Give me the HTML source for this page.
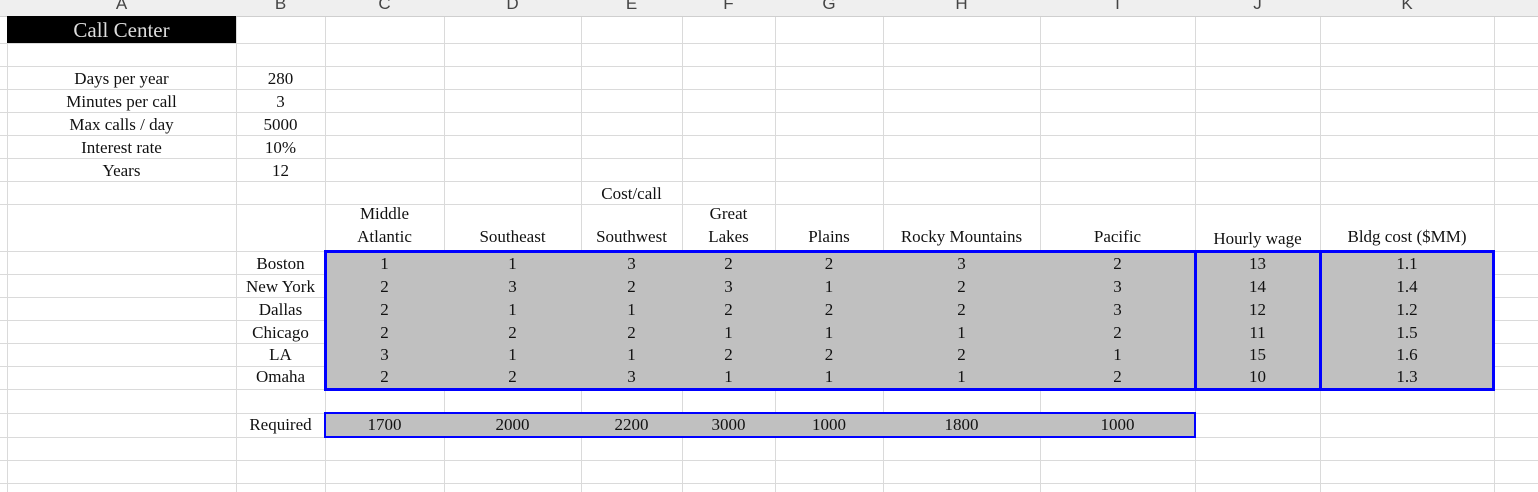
<!DOCTYPE html>
<html><head><meta charset="utf-8"><style>
body{margin:0;width:1538px;height:492px;overflow:hidden;background:#fff;position:relative;font-family:"Liberation Serif",serif;color:#111;font-size:17px}
.v{position:absolute;top:0;width:1px;height:492px;background:#dadada}
.hl{position:absolute;left:0;width:1538px;height:1px;background:#dadada}
.r{position:absolute;left:0;width:1538px;height:23px;line-height:24px}
.r>div{position:absolute;top:0;text-align:center;white-space:nowrap}
.a{left:7px;width:229px}.b{left:236px;width:89px}.c{left:325px;width:119px}.d{left:444px;width:137px}.e{left:581px;width:101px}.f{left:682px;width:93px}.g{left:775px;width:108px}.h{left:883px;width:157px}.i{left:1040px;width:155px}.j{left:1195px;width:125px}.k{left:1320px;width:174px}
.hdr{position:absolute;left:0;top:0;width:1538px;height:16px;background:#efefef;border-bottom:1px solid #cfcfcf;font-family:"Liberation Sans",sans-serif;color:#444;font-size:17px;line-height:12px;overflow:hidden}
.hdr div{position:absolute;top:-2px;text-align:center}
.fill{position:absolute;background:#c0c0c0}
.box{position:absolute;border:3px solid #0000ff;box-sizing:border-box}
</style></head><body>
<div class="hl" style="top:43px"></div><div class="hl" style="top:66px"></div><div class="hl" style="top:89px"></div><div class="hl" style="top:112px"></div><div class="hl" style="top:135px"></div><div class="hl" style="top:158px"></div><div class="hl" style="top:181px"></div><div class="hl" style="top:204px"></div><div class="hl" style="top:251px"></div><div class="hl" style="top:274px"></div><div class="hl" style="top:297px"></div><div class="hl" style="top:320px"></div><div class="hl" style="top:343px"></div><div class="hl" style="top:366px"></div><div class="hl" style="top:389px"></div><div class="hl" style="top:413px"></div><div class="hl" style="top:437px"></div><div class="hl" style="top:460px"></div><div class="hl" style="top:483px"></div>
<div class="v" style="left:7px"></div><div class="v" style="left:236px"></div><div class="v" style="left:325px"></div><div class="v" style="left:444px"></div><div class="v" style="left:581px"></div><div class="v" style="left:682px"></div><div class="v" style="left:775px"></div><div class="v" style="left:883px"></div><div class="v" style="left:1040px"></div><div class="v" style="left:1195px"></div><div class="v" style="left:1320px"></div><div class="v" style="left:1494px"></div>
<div class="hdr"><div class="a">A</div><div class="b">B</div><div class="c">C</div><div class="d">D</div><div class="e">E</div><div class="f">F</div><div class="g">G</div><div class="h">H</div><div class="i">I</div><div class="j">J</div><div class="k">K</div></div>
<div style="position:absolute;left:7px;top:16px;width:229px;height:27px;background:#000;color:#ddd;font-size:21px;line-height:28px;text-align:center">Call Center</div>
<div class="fill" style="left:325px;top:251px;width:1169px;height:138px"></div>
<div class="fill" style="left:325px;top:413px;width:870px;height:24px"></div>
<div class="r" style="top:67px"><div class="a">Days per year</div><div class="b">280</div></div>
<div class="r" style="top:90px"><div class="a">Minutes per call</div><div class="b">3</div></div>
<div class="r" style="top:113px"><div class="a">Max calls / day</div><div class="b">5000</div></div>
<div class="r" style="top:136px"><div class="a">Interest rate</div><div class="b">10%</div></div>
<div class="r" style="top:159px"><div class="a">Years</div><div class="b">12</div></div>
<div class="r" style="top:182px"><div class="e">Cost/call</div></div>
<div class="r" style="top:202px"><div class="c">Middle</div><div class="f">Great</div></div>
<div class="r" style="top:225px"><div class="c">Atlantic</div><div class="d">Southeast</div><div class="e">Southwest</div><div class="f">Lakes</div><div class="g">Plains</div><div class="h">Rocky Mountains</div><div class="i">Pacific</div><div class="j" style="top:2px">Hourly wage</div><div class="k">Bldg cost ($MM)</div></div>
<div class="r" style="top:252px"><div class="b">Boston</div><div class="c">1</div><div class="d">1</div><div class="e">3</div><div class="f">2</div><div class="g">2</div><div class="h">3</div><div class="i">2</div><div class="j">13</div><div class="k">1.1</div></div>
<div class="r" style="top:275px"><div class="b">New York</div><div class="c">2</div><div class="d">3</div><div class="e">2</div><div class="f">3</div><div class="g">1</div><div class="h">2</div><div class="i">3</div><div class="j">14</div><div class="k">1.4</div></div>
<div class="r" style="top:298px"><div class="b">Dallas</div><div class="c">2</div><div class="d">1</div><div class="e">1</div><div class="f">2</div><div class="g">2</div><div class="h">2</div><div class="i">3</div><div class="j">12</div><div class="k">1.2</div></div>
<div class="r" style="top:321px"><div class="b">Chicago</div><div class="c">2</div><div class="d">2</div><div class="e">2</div><div class="f">1</div><div class="g">1</div><div class="h">1</div><div class="i">2</div><div class="j">11</div><div class="k">1.5</div></div>
<div class="r" style="top:343px"><div class="b">LA</div><div class="c">3</div><div class="d">1</div><div class="e">1</div><div class="f">2</div><div class="g">2</div><div class="h">2</div><div class="i">1</div><div class="j">15</div><div class="k">1.6</div></div>
<div class="r" style="top:365px"><div class="b">Omaha</div><div class="c">2</div><div class="d">2</div><div class="e">3</div><div class="f">1</div><div class="g">1</div><div class="h">1</div><div class="i">2</div><div class="j">10</div><div class="k">1.3</div></div>
<div class="r" style="top:413px"><div class="b">Required</div><div class="c">1700</div><div class="d">2000</div><div class="e">2200</div><div class="f">3000</div><div class="g">1000</div><div class="h">1800</div><div class="i">1000</div></div>
<div class="box" style="left:324px;top:250px;width:873px;height:141px"></div>
<div class="box" style="left:1194px;top:250px;width:128px;height:141px"></div>
<div class="box" style="left:1319px;top:250px;width:176px;height:141px"></div>
<div class="box" style="left:324px;top:412px;width:872px;height:26px;border-width:2px"></div>
</body></html>
